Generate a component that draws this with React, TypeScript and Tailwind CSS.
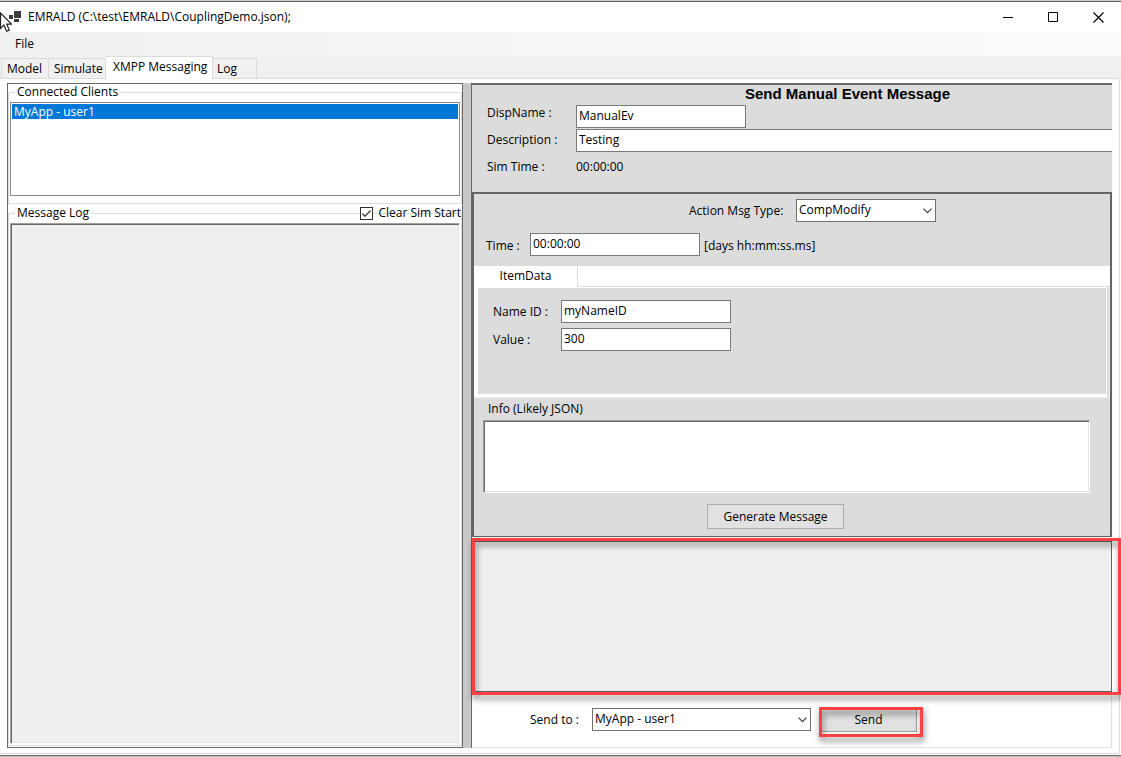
import { useState, type ReactNode } from 'react';
import { clsx } from 'clsx';

const TABS = ['Model', 'Simulate', 'XMPP Messaging', 'Log'];
const CLIENTS = ['MyApp - user1'];

const inputClass = 'block h-[23px] rounded-none border border-[#7a7a7a] bg-white px-[2px] pb-[2px] outline-none';
const sunkenClass = 'block w-full resize-none border border-t-[#a0a0a0] border-r-white border-b-white border-l-[#a0a0a0] shadow-[inset_1px_1px_0_#696969,inset_-1px_-1px_0_#e3e3e3] outline-none';

type SelectBoxProps = {
  id: string;
  options: string[];
  className: string;
};

function SelectBox({ id, options, className }: SelectBoxProps) {
  return (
    <div className={clsx('relative', className)}>
      <select id={id} className="block h-[23px] w-full appearance-none border border-[#707070] bg-white pr-5 pb-[2px] pl-[2px] outline-none">
        {options.map((option) => (
          <option key={option}>{option}</option>
        ))}
      </select>
      <svg className="pointer-events-none absolute top-[9px] right-1 h-[6px] w-[9px]" viewBox="0 0 9 6" fill="none" stroke="#404040" strokeWidth="1.2">
        <path d="M0.5 0.7 4.5 4.7 8.5 0.7" />
      </svg>
    </div>
  );
}

function Highlight({ className }: { className: string }) {
  return (
    <div className={clsx('pointer-events-none absolute z-10 border-3 border-[#ff4141] drop-shadow-[1px_4px_3px_rgba(0,0,0,0.55)]', className)} />
  );
}

function TitleBar() {
  return (
    <header className="relative flex h-8 items-center border-t border-[#c8c8c8] bg-white">
      <div className="h-full grow border-t border-[#696969]">
        <div className="flex h-[30px] items-center pl-[9px]">
          <svg className="h-3 w-3" viewBox="0 0 12 12" fill="#3c3c3c">
            <path d="M0 4h4v4H0zM5 0h7v7H5zM5 8h5v3H5z" />
          </svg>
          <h1 className="ml-[7px] grow">EMRALD (C:\test\EMRALD\CouplingDemo.json);</h1>
          <button type="button" aria-label="Minimize" className="flex h-[30px] w-[45px] items-center justify-center">
            <svg className="h-[11px] w-[11px]" viewBox="0 0 11 11" stroke="#000">
              <path d="M0 5.5h10" />
            </svg>
          </button>
          <button type="button" aria-label="Maximize" className="flex h-[30px] w-[45px] items-center justify-center">
            <svg className="h-[11px] w-[11px]" viewBox="0 0 11 11" fill="none" stroke="#000">
              <path d="M0.5 0.5h9v9h-9z" />
            </svg>
          </button>
          <button type="button" aria-label="Close" className="flex h-[30px] w-[45px] items-center justify-center">
            <svg className="h-[11px] w-[11px]" viewBox="0 0 11 11" stroke="#000" strokeWidth="1.2">
              <path d="M0.5 0.5 10.5 10.5M10.5 0.5 0.5 10.5" />
            </svg>
          </button>
        </div>
      </div>
      {/* mouse pointer */}
      <svg className="absolute top-[11px] left-0 h-[21px] w-3" viewBox="0 0 12 21" fill="#fff" stroke="#222" strokeWidth="1.2">
        <path d="M0.5 1v15.5l3.4-3.4 2.7 6.2 2.7-1.2-2.6-6h4.8z" />
      </svg>
    </header>
  );
}

function Group({ title, className, children }: { title: string; className?: string; children: ReactNode }) {
  return (
    <fieldset className={clsx('relative flex min-w-0 flex-col border border-[#dcdcdc] px-px', className)}>
      <legend className="ml-[5px] px-[2px] leading-4">{title}</legend>
      {children}
    </fieldset>
  );
}

function ClientsPanel() {
  const [selected, setSelected] = useState(CLIENTS[0]);
  return (
    <section className="flex flex-col border border-[#696969] bg-white">
      <Group title="Connected Clients" className="pt-[2px] pb-[7px]">
        <ul className="h-[94px] border border-[#828790] p-px">
          {CLIENTS.map((client) => (
            <li key={client}>
              <button
                type="button"
                onClick={() => setSelected(client)}
                className={clsx('block h-[15px] w-full px-[2px] text-left leading-[15px]', client === selected && 'bg-[#0078d7] text-white')}
              >
                {client}
              </button>
            </li>
          ))}
        </ul>
      </Group>
      <Group title="Message Log" className="mt-px mb-px grow pt-[2px] pb-px">
        <label className="absolute -top-4 right-0 flex h-4 items-center gap-[5px] leading-4">
          <span className="relative flex bg-white">
            <input type="checkbox" defaultChecked className="peer h-[13px] w-[13px] appearance-none border border-[#333] bg-white" />
            <svg className="pointer-events-none invisible absolute top-0 left-0 h-[13px] w-[13px] peer-checked:visible" viewBox="0 0 13 13" fill="none" stroke="#444" strokeWidth="1.4">
              <path d="M2.5 6.5 5 9.2 10.5 3.5" />
            </svg>
          </span>
          Clear Sim Start
        </label>
        <textarea readOnly aria-label="Message Log" className={clsx(sunkenClass, 'grow bg-[#efefef]')} />
      </Group>
    </section>
  );
}

function EventHeader() {
  return (
    <div className="h-[107px] shrink-0 bg-[#dcdcdc] pl-[15px]">
      <h2 className="h-5 pl-[258px] font-['Liberation_Sans',sans-serif] text-[15px] leading-[18px] font-bold">Send Manual Event Message</h2>
      <div className="grid grid-cols-[89px_1fr] gap-y-px">
        <label htmlFor="disp-name" className="leading-4">DispName :</label>
        <input id="disp-name" defaultValue="ManualEv" className={clsx(inputClass, 'w-[170px]')} />
        <label htmlFor="description" className="leading-[22px]">Description :</label>
        <input id="description" defaultValue="Testing" className={clsx(inputClass, 'w-full border-r-0')} />
        <span className="leading-7">Sim Time :</span>
        <span className="leading-7">00:00:00</span>
      </div>
    </div>
  );
}

function ActionPanel() {
  return (
    <div className="shrink-0 border-2 border-b border-[#646464] bg-[#dcdcdc] pt-[5px] pb-[7px]">
      <div className="flex items-center pl-[215px]">
        <label htmlFor="msg-type" className="w-[107px]">Action Msg Type:</label>
        <SelectBox id="msg-type" options={['CompModify']} className="w-[140px]" />
      </div>
      <div className="mt-[11px] flex items-center pl-3">
        <label htmlFor="time" className="w-11 pt-[2px]">Time :</label>
        <input id="time" defaultValue="00:00:00" className={clsx(inputClass, 'w-[170px]')} />
        <span className="ml-1 pt-[2px]">[days hh:mm:ss.ms]</span>
      </div>

      <div className="mt-[10px] flex h-[21px] border-b border-[#dcdcdc] bg-white">
        <button type="button" className="-mb-px h-[21px] w-[104px] border-r border-[#dcdcdc] bg-white pb-[2px]">ItemData</button>
      </div>
      <div className="border-r border-b border-[#efefef]">
        <div className="mr-[2px] h-[110px] border-t border-r border-b-3 border-l-4 border-white bg-[#dcdcdc] pt-3 pl-[15px]">
          <div className="flex items-center">
            <label htmlFor="name-id" className="w-[68px]">Name ID :</label>
            <input id="name-id" defaultValue="myNameID" className={clsx(inputClass, 'w-[170px]')} />
          </div>
          <div className="mt-[5px] flex items-center">
            <label htmlFor="value" className="w-[68px]">Value :</label>
            <input id="value" defaultValue="300" className={clsx(inputClass, 'w-[170px]')} />
          </div>
        </div>
      </div>

      <label htmlFor="info" className="block h-[22px] pl-[14px] leading-[22px]">Info (Likely JSON)</label>
      <div className="pr-5 pl-[9px]">
        <textarea id="info" className={clsx(sunkenClass, 'h-[73px] bg-white')} />
      </div>
      <button type="button" className="mt-[11px] ml-[233px] block h-[25px] w-[137px] border border-[#adadad] bg-[#e1e1e1]">
        Generate Message
      </button>
    </div>
  );
}

function SendBar() {
  return (
    <div className="flex h-14 shrink-0 items-center border-r border-b border-[#e0e0e0] bg-white pl-[58px]">
      <label htmlFor="send-to" className="w-[62px]">Send to :</label>
      <SelectBox id="send-to" options={CLIENTS} className="w-[219px]" />
      <div className="relative ml-[9px]">
        <button type="button" className="block h-6 w-[97px] border border-[#a0a0a0] bg-[#e1e1e1]">Send</button>
        <Highlight className="-top-px -right-[6px] -bottom-[5px] -left-px" />
      </div>
    </div>
  );
}

export default function App() {
  const [activeTab, setActiveTab] = useState('XMPP Messaging');

  return (
    <div className="flex min-h-screen flex-col overflow-x-hidden bg-white font-['Open_Sans','Noto_Sans',sans-serif] text-[12px] leading-4 text-black">
      <TitleBar />
      <nav className="flex h-6 items-center bg-linear-to-r from-[#f0f0f0] to-[#fcfcfc] pl-[15px]">
        <button type="button">File</button>
      </nav>
      <div role="tablist" className="flex h-[23px] items-end border-b border-[#dcdcdc] bg-[#f0f0f0] pl-px">
        {TABS.map((tab) => (
          <button
            key={tab}
            type="button"
            role="tab"
            aria-selected={tab === activeTab}
            onClick={() => setActiveTab(tab)}
            className={clsx(
              'border-t border-r border-[#dcdcdc] text-left whitespace-nowrap',
              tab === activeTab ? '-mb-px h-[23px] bg-white pb-[2px]' : 'h-5',
              tab === 'Model' && 'w-12 border-l pl-[5px]',
              tab === 'Simulate' && 'w-[57px] pl-[5px]',
              tab === 'XMPP Messaging' && 'w-[107px] pl-[7px]',
              tab === 'Log' && 'w-11 pl-1',
            )}
          >
            {tab}
          </button>
        ))}
      </div>

      <main className="mr-px grid grow grid-cols-[456px_8px_1fr] border-r border-b border-[#dcdcdc] pt-1 pr-[7px] pb-[5px] pl-[7px]">
        <ClientsPanel />
        <div className="bg-[#c8c8c8]" />
        <section className="flex min-w-0 flex-col border-t-2 border-l border-[#696969]">
          <EventHeader />
          <ActionPanel />
          <div className="relative mt-1 flex min-h-[150px] grow">
            <textarea
              readOnly
              aria-label="Generated message"
              className="block w-full resize-none border-t border-r border-b border-[#646464] bg-[#efefef] outline-none"
            />
            <Highlight className="-top-[3px] -right-[9px] -bottom-[3px] left-0" />
          </div>
          <SendBar />
        </section>
      </main>
      <footer className="mt-px h-[2px] border-t border-[#696969] bg-[#c0c0c0]" />
    </div>
  );
}
